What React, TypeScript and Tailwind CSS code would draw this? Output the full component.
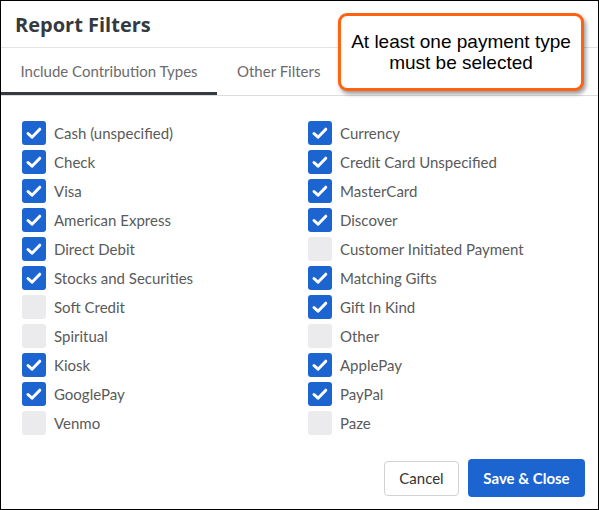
import React from "react";

const left: [string, boolean][] = [
  ["Cash (unspecified)", true],
  ["Check", true],
  ["Visa", true],
  ["American Express", true],
  ["Direct Debit", true],
  ["Stocks and Securities", true],
  ["Soft Credit", false],
  ["Spiritual", false],
  ["Kiosk", true],
  ["GooglePay", true],
  ["Venmo", false],
];

const right: [string, boolean][] = [
  ["Currency", true],
  ["Credit Card Unspecified", true],
  ["MasterCard", true],
  ["Discover", true],
  ["Customer Initiated Payment", false],
  ["Matching Gifts", true],
  ["Gift In Kind", true],
  ["Other", false],
  ["ApplePay", true],
  ["PayPal", true],
  ["Paze", false],
];

function Box({ checked }: { checked: boolean }) {
  if (!checked) {
    return <div className="w-[24px] h-[24px] rounded-[3px] bg-[#ebebed] shrink-0" />;
  }
  return (
    <div className="w-[24px] h-[24px] rounded-[3px] bg-[#1c64d0] shrink-0 flex items-center justify-center">
      <svg width="24" height="24" viewBox="0 0 24 24">
        <path d="M6 12.5 L10 16.2 L17.8 8.2" fill="none" stroke="#ffffff" strokeWidth="3" strokeLinecap="round" strokeLinejoin="round" />
      </svg>
    </div>
  );
}

function Column({ items }: { items: [string, boolean][] }) {
  return (
    <div className="flex flex-col gap-[5px]">
      {items.map(([label, c]) => (
        <div key={label} className="flex items-center h-[24px]">
          <Box checked={c} />
          <span className="ml-[8px] text-[15px] text-[#5a5a5a] leading-none">{label}</span>
        </div>
      ))}
    </div>
  );
}

export default function App() {
  return (
    <div
      className="relative w-[599px] h-[510px] border border-black bg-white flex flex-col overflow-hidden"
      style={{ fontFamily: "Lato, 'Open Sans', sans-serif" }}
    >
      <div className="h-[47px] shrink-0 border-b border-[#e3e3e3] pl-[14px] flex items-center">
        <h1
          className="text-[20px] font-bold text-[#343a40] leading-none mt-[1px]"
          style={{ fontFamily: "'Open Sans', Lato, sans-serif" }}
        >
          Report Filters
        </h1>
      </div>
      <div className="h-[48px] shrink-0 flex border-b border-[#dcdcdc]">
        <div className="w-[216px] flex items-center justify-center border-b-[3px] border-[#343a40] text-[15px] text-[#6b6b6b] pt-[3px]">
          Include Contribution Types
        </div>
        <div className="pl-[20px] flex items-center text-[15px] text-[#6b6b6b]">Other Filters</div>
      </div>
      <div className="pt-[25px] pl-[21px] grid grid-cols-[286px_1fr]">
        <Column items={left} />
        <Column items={right} />
      </div>
      <div className="flex-1" />
      <div className="flex justify-end items-center gap-[9px] pr-[13px] pb-[12px]">
        <button className="w-[75px] h-[35px] rounded-[4px] border border-[#d2d2d2] bg-white text-[15px] text-[#333]">
          Cancel
        </button>
        <button className="w-[117px] h-[38px] rounded-[4px] bg-[#1c64d0] text-white text-[15px] font-bold">
          Save &amp; Close
        </button>
      </div>
      <div
        className="absolute left-[337px] top-[12px] w-[246px] h-[78px] rounded-[9px] border-[3px] border-[#ff6210] bg-white shadow-[2px_3px_4px_rgba(0,0,0,0.4)] flex flex-col items-center justify-center text-[19px] leading-[21px] text-black"
        style={{ fontFamily: "'Liberation Sans', Arial, sans-serif" }}
      >
        <div>At least one payment type</div>
        <div>must be selected</div>
      </div>
    </div>
  );
}
